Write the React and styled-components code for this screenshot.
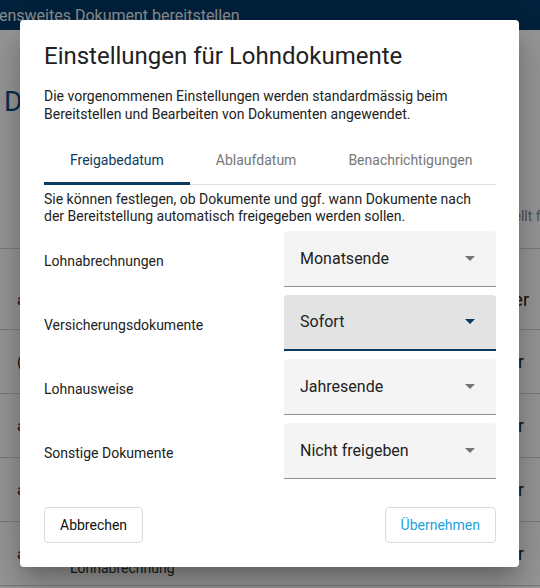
import React, { useState } from "react";
import styled, { createGlobalStyle } from "styled-components";

const Global = createGlobalStyle`
  html, body { margin: 0; padding: 0; }
  body {
    font-family: Roboto, "Noto Sans", "Liberation Sans", sans-serif;
    background: #ffffff;
    overflow: hidden;
  }
`;

const Page = styled.div`
  position: relative;
  width: 540px;
  height: 588px;
  overflow: hidden;
  background: #fff;
`;

const AppBar = styled.header`
  height: 30px;
  background: #003764;
  color: #e6ebf0;
  display: flex;
  align-items: center;
  font-size: 16px;
  white-space: nowrap;
`;

const AppTitle = styled.span`
  margin-left: -1px;
`;

const Heading = styled.h1`
  margin: 0;
  padding: 57px 0 0 4px;
  font-size: 28px;
  font-weight: 400;
  color: #0b4f86;
  line-height: 30px;
`;

const Toolbar = styled.div`
  height: 43px;
  display: flex;
  align-items: center;
  padding: 8px 0 0 17px;
  font-size: 18px;
  color: #333;
`;

const TableHead = styled.div`
  height: 81px;
  display: flex;
  align-items: flex-end;
  padding: 0 0 24px 489px;
  box-sizing: border-box;
  border-bottom: 1px solid #d0d0d0;
  font-size: 14px;
  color: #8a8a8a;
  white-space: nowrap;
`;

const Row = styled.div`
  height: ${(p) => p.$h}px;
  box-sizing: border-box;
  border-bottom: 1px solid #d0d0d0;
  display: flex;
  align-items: ${(p) => (p.$pt ? "flex-start" : "center")};
  padding-top: ${(p) => p.$pt || 0}px;
  font-size: 16px;
  color: #222;
  white-space: nowrap;
`;

const RowIcon = styled.span`
  width: 34px;
  padding-left: 17px;
  flex: none;
  font-size: 15px;
  line-height: 18px;
`;

const RowMain = styled.div`
  flex: 1;
  display: flex;
  flex-direction: column;
  padding-left: 19px;
  margin-top: ${(p) => p.$mt || 0}px;
  font-size: 14px;
  line-height: 18px;
  color: #333;
`;

const RowEnd = styled.span`
  padding-right: ${(p) => p.$pr}px;
  font-size: 18px;
  line-height: 18px;
`;

const Overlay = styled.div`
  position: absolute;
  inset: 0;
  background: rgba(0, 0, 0, 0.4);
`;

const Dialog = styled.div`
  position: absolute;
  left: 20px;
  top: 20px;
  width: 499px;
  height: 547px;
  box-sizing: border-box;
  background: #fff;
  border-radius: 4px;
  box-shadow: 0px 11px 15px -7px rgba(0, 0, 0, 0.2),
    0px 24px 38px 3px rgba(0, 0, 0, 0.14), 0px 9px 46px 8px rgba(0, 0, 0, 0.12);
  padding: 20px 23px 0 24px;
  display: flex;
  flex-direction: column;
  color: #222;
`;

const Title = styled.h2`
  margin: 0;
  font-size: 24px;
  line-height: 32px;
  font-weight: 400;
  color: #212121;
`;

const Lead = styled.p`
  margin: 15px 0 0 0;
  font-size: 14px;
  line-height: 18px;
  color: #222;
`;

const TabBar = styled.div`
  margin-top: 13px;
  display: flex;
  border-bottom: 1px solid #e0e0e0;
`;

const Tab = styled.button`
  position: relative;
  height: 48px;
  padding: 0 ${(p) => p.$px}px;
  border: 0;
  background: none;
  font-family: inherit;
  font-size: 14px;
  color: ${(p) => (p.$active ? "#0b3b60" : "#777")};
  cursor: pointer;
  &::after {
    content: "";
    position: absolute;
    left: 0;
    right: 0;
    bottom: -1px;
    height: 3px;
    background: ${(p) => (p.$active ? "#0b3b60" : "transparent")};
  }
`;

const Info = styled.p`
  margin: 6px 0 0 0;
  font-size: 14px;
  line-height: 17px;
  color: #222;
  padding-right: 14px;
`;

const Fields = styled.div`
  margin-top: 6px;
  display: flex;
  flex-direction: column;
  gap: 8px;
`;

const FieldRow = styled.div`
  display: grid;
  grid-template-columns: 240px 212px;
  align-items: center;
`;

const Label = styled.span`
  font-size: 14px;
  color: #222;
  padding-top: 4px;
`;

const Select = styled.div`
  height: 56px;
  box-sizing: border-box;
  background: ${(p) => (p.$focused ? "#e3e3e3" : "#f4f4f4")};
  border-radius: 4px 4px 0 0;
  border-bottom: ${(p) => (p.$focused ? "2px solid #0b3b60" : "1px solid #8f8f8f")};
  display: flex;
  align-items: center;
  justify-content: space-between;
  padding: 0 16px 0 16px;
  padding-bottom: ${(p) => (p.$focused ? 2 : 1)}px;
  font-size: 16px;
  color: #222;
`;

const Arrow = styled.svg`
  width: 24px;
  height: 24px;
  margin-right: -2px;
  fill: ${(p) => (p.$focused ? "#0b3b60" : "#757575")};
`;

const Actions = styled.div`
  margin-top: 28px;
  display: flex;
  justify-content: space-between;
`;

const Button = styled.button`
  height: 36px;
  padding: 0 15px;
  border: 1px solid #dcdcdc;
  border-radius: 4px;
  background: #fff;
  font-family: inherit;
  font-size: 14px;
  color: ${(p) => (p.$primary ? "#1ba2de" : "#111")};
  cursor: pointer;
`;

const fields = [
  { label: "Lohnabrechnungen", value: "Monatsende" },
  { label: "Versicherungsdokumente", value: "Sofort", focused: true },
  { label: "Lohnausweise", value: "Jahresende" },
  { label: "Sonstige Dokumente", value: "Nicht freigeben" },
];

export default function App() {
  const [tab, setTab] = useState(0);
  const tabs = [
    { t: "Freigabedatum", px: 26 },
    { t: "Ablaufdatum", px: 26 },
    { t: "Benachrichtigungen", px: 26 },
  ];
  return (
    <Page>
      <Global />
      <AppBar>
        <AppTitle>ensweites Dokument bereitstellen</AppTitle>
      </AppBar>
      <Heading>Dokumente</Heading>
      <Toolbar>⋮</Toolbar>
      <TableHead>Erstellt für</TableHead>
      <Row $h={81} $pt={42}>
        <RowIcon>a</RowIcon>
        <RowMain>Lohnabrechnung</RowMain>
        <RowEnd $pr={11}>Arbeitgeber</RowEnd>
      </Row>
      <Row $h={64}>
        <RowIcon>(</RowIcon>
        <RowMain>Versicherung</RowMain>
        <RowEnd $pr={16}>Mitarbeiter</RowEnd>
      </Row>
      <Row $h={64}>
        <RowIcon>a</RowIcon>
        <RowMain>Lohnausweis</RowMain>
        <RowEnd $pr={16}>Mitarbeiter</RowEnd>
      </Row>
      <Row $h={64}>
        <RowIcon>a</RowIcon>
        <RowMain>Lohnausweis</RowMain>
        <RowEnd $pr={16}>Mitarbeiter</RowEnd>
      </Row>
      <Row $h={64}>
        <RowIcon>a</RowIcon>
        <RowMain $mt={10}>
          <span>Dezember 2023</span>
          <span>Lohnabrechnung</span>
        </RowMain>
        <RowEnd $pr={16}>Mitarbeiter</RowEnd>
      </Row>

      <Overlay />
      <Dialog role="dialog">
        <Title>Einstellungen für Lohndokumente</Title>
        <Lead>
          Die vorgenommenen Einstellungen werden standardmässig beim
          Bereitstellen und Bearbeiten von Dokumenten angewendet.
        </Lead>
        <TabBar>
          {tabs.map((x, i) => (
            <Tab key={x.t} $px={x.px} $active={tab === i} onClick={() => setTab(i)}>
              {x.t}
            </Tab>
          ))}
        </TabBar>
        <Info>
          Sie können festlegen, ob Dokumente und ggf. wann Dokumente nach der
          Bereitstellung automatisch freigegeben werden sollen.
        </Info>
        <Fields>
          {fields.map((f) => (
            <FieldRow key={f.label}>
              <Label>{f.label}</Label>
              <Select $focused={f.focused}>
                <span>{f.value}</span>
                <Arrow viewBox="0 0 24 24" $focused={f.focused}>
                  <path d="M7 10l5 5 5-5z" />
                </Arrow>
              </Select>
            </FieldRow>
          ))}
        </Fields>
        <Actions>
          <Button>Abbrechen</Button>
          <Button $primary>Übernehmen</Button>
        </Actions>
      </Dialog>
    </Page>
  );
}
